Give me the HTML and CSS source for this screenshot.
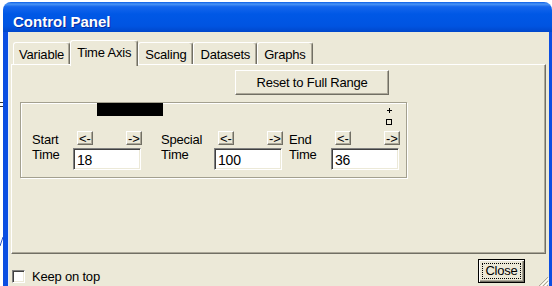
FILE: index.html
```html
<!DOCTYPE html>
<html lang="en">
<head>
    <meta charset="UTF-8">
    <title>Control Panel</title>
    <link rel="stylesheet" href="styles.css">
</head>
<body>
    <svg class="desktop-bits" width="6" height="286" viewBox="0 0 6 286">
        <path d="M0 102.5h3M0 106.5h3" stroke="#333" stroke-width="1"/>
        <path d="M0 246l3 -9" stroke="#2a52c8" stroke-width="1"/>
    </svg>

    <div class="window">
        <div class="titlebar">Control Panel</div>
        <div class="client">
            <div class="tabs">
                <div class="tab">Variable</div>
                <div class="tab active">Time Axis</div>
                <div class="tab">Scaling</div>
                <div class="tab">Datasets</div>
                <div class="tab">Graphs</div>
            </div>

            <div class="tab-panel">
                <button class="btn reset">Reset to Full Range</button>

                <div class="group">
                    <div class="group-top">
                        <div class="time-bar"></div>
                        <div class="markers">
                            <svg width="5" height="5" viewBox="0 0 5 5"><path d="M2.5 0v5M0 2.5h5" stroke="#000" stroke-width="1"/></svg>
                            <span class="marker-box"></span>
                        </div>
                    </div>

                    <div class="fields">
                        <div class="field field-start">
                            <div class="field-label">Start<br>Time</div>
                            <div class="field-ctrl">
                                <div class="steps"><button class="step">&lt;-</button><button class="step">-&gt;</button></div>
                                <input class="field-input" type="text" value="18">
                            </div>
                        </div>
                        <div class="field field-special">
                            <div class="field-label">Special<br>Time</div>
                            <div class="field-ctrl">
                                <div class="steps"><button class="step">&lt;-</button><button class="step">-&gt;</button></div>
                                <input class="field-input" type="text" value="100">
                            </div>
                        </div>
                        <div class="field field-end">
                            <div class="field-label">End<br>Time</div>
                            <div class="field-ctrl">
                                <div class="steps"><button class="step">&lt;-</button><button class="step">-&gt;</button></div>
                                <input class="field-input" type="text" value="36">
                            </div>
                        </div>
                    </div>
                </div>
            </div>

            <div class="bottom-row">
                <label class="keep"><span class="check"></span>Keep on top</label>
                <button class="btn close"><span class="focus">Close</span></button>
            </div>

            <svg class="grip" width="12" height="12" viewBox="0 0 12 12">
                <path d="M11 1L1 11M11 5L5 11M11 9L9 11" stroke="#aca899" stroke-width="1"/>
                <path d="M12 2L2 12M12 6L6 12M12 10L10 12" stroke="#fff" stroke-width="1"/>
            </svg>
        </div>
    </div>
</body>
</html>
```

FILE: styles.css
```css
* {
    box-sizing: border-box;
}
body {
    margin: 0;
    width: 552px;
    height: 286px;
    overflow: hidden;
    position: relative;
    background: #fff;
    font-family: "Liberation Sans", Arial, sans-serif;
    font-size: 13px;
    letter-spacing: -0.2px;
    color: #000;
}
.desktop-bits {
    position: absolute;
    left: 0;
    top: 0;
}

/* window frame */
.window {
    margin: 2px 0 0 3px;
    width: 549px;
}
.titlebar {
    height: 30px;
    padding: 12px 0 0 10px;
    border-radius: 8px 8px 0 0;
    background: linear-gradient(to bottom, #0a5fe8 0%, #4a94f5 7%, #1566ec 16%, #0058e6 40%, #0054e1 80%, #0047cb 100%);
    color: #fff;
    font-size: 15px;
    font-weight: bold;
    line-height: 16px;
    letter-spacing: 0;
    text-shadow: 1px 1px #0a2a9a;
}
.client {
    position: relative;
    height: 256px;
    background: #ece9d8;
    border-left: 5px solid #0b4ee2;
    border-right: 3px solid #0b4ee2;
    box-shadow: inset 1px 0 #e4ecfa;
}

/* tabs */
.tabs {
    display: flex;
    align-items: flex-end;
    height: 32px;
    padding: 8px 0 0 5px;
}
.tab {
    height: 22px;
    padding: 4px 6px 0;
    line-height: 15px;
    border: 1px solid #fff;
    border-right-color: #716f64;
    border-bottom: none;
    border-radius: 3px 3px 0 0;
    box-shadow: inset -1px 0 #aca899;
    white-space: nowrap;
}
.tab:first-child {
    padding: 4px 5px 0;
}
.tab.active {
    position: relative;
    z-index: 1;
    height: 26px;
    margin-bottom: -2px;
    padding-top: 4px;
    background: #ece9d8;
}

.tab-panel {
    height: 190px;
    margin: 0 3px;
    padding: 5px 0 0 8px;
    border: 1px solid #fff;
    border-right-color: #716f64;
    border-bottom-color: #716f64;
    box-shadow: inset -1px -1px #aca899;
}

/* buttons */
.btn {
    font: inherit;
    letter-spacing: inherit;
    color: #000;
    background: #ece9d8;
    border: 1px solid;
    border-color: #fff #716f64 #716f64 #fff;
    box-shadow: inset -1px -1px #aca899;
    padding: 0;
    cursor: default;
}
.reset {
    display: block;
    width: 154px;
    height: 25px;
    margin-left: 215px;
}

/* group box */
.group {
    width: 387px;
    height: 76px;
    margin-top: 7px;
    border: 1px solid #a3a08f;
    box-shadow: inset 1px 1px #fff, 1px 1px #fff;
}
.group-top {
    display: flex;
    justify-content: space-between;
    height: 28px;
    padding: 0 14px 0 76px;
}
.time-bar {
    width: 66px;
    height: 13px;
    background: #000;
}
.markers {
    display: flex;
    flex-direction: column;
    align-items: center;
    gap: 6px;
    padding-top: 5px;
}
.markers svg {
    display: block;
}
.marker-box {
    width: 6px;
    height: 6px;
    border: 1px solid #000;
}

.fields {
    display: flex;
    padding-left: 11px;
}
.field {
    display: flex;
}
.field-label {
    width: 41px;
    padding-top: 1px;
    line-height: 15px;
}
.field-special {
    margin-left: 19px;
}
.field-special .field-label {
    width: 53px;
}
.field-end {
    margin-left: 6px;
}
.field-end .field-label {
    width: 42px;
}
.field-ctrl {
    width: 69px;
}
.steps {
    display: flex;
    justify-content: space-between;
    padding-left: 4px;
    margin-bottom: 3px;
}
.step {
    width: 16px;
    height: 14px;
    padding: 0;
    font: 13px "Liberation Sans", Arial, sans-serif;
    line-height: 11px;
    color: #000;
    background: #ece9d8;
    border: 1px solid;
    border-color: #fff #716f64 #716f64 #fff;
    box-shadow: inset -1px -1px #aca899;
}
.field-input {
    display: block;
    width: 68px;
    height: 22px;
    padding: 1px 0 0 3px;
    font: inherit;
    font-size: 14px;
    letter-spacing: inherit;
    background: #fff;
    border: 1px solid;
    border-color: #808080 #fff #fff #808080;
    box-shadow: inset 1px 1px #404040, inset -1px -1px #ece9d8;
    outline: none;
}

/* bottom row */
.bottom-row {
    display: flex;
    justify-content: space-between;
    align-items: flex-end;
    height: 29px;
    padding: 0 24px 0 4px;
}
.keep {
    display: flex;
    align-items: center;
    gap: 7px;
    line-height: 13px;
}
.check {
    width: 13px;
    height: 13px;
    background: #fff;
    border: 1px solid;
    border-color: #808080 #fff #fff #808080;
    box-shadow: inset 1px 1px #404040, inset -1px -1px #ece9d8;
}
.close {
    width: 47px;
    height: 24px;
    padding: 3px;
    border: 1px solid #000;
    box-shadow: inset 1px 1px #fff, inset -1px -1px #716f64, inset -2px -2px #aca899;
}
.close .focus {
    display: block;
    height: 100%;
    line-height: 14px;
    border: 1px dotted #000;
}
.grip {
    position: absolute;
    right: 0;
    bottom: 0;
}
```
